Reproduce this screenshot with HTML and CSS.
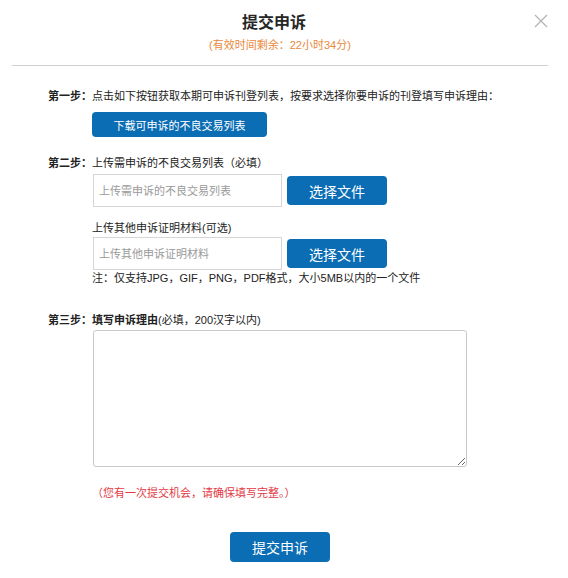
FILE: index.html
```html
<!DOCTYPE html>
<html lang="zh-CN">
<head>
<meta charset="utf-8">
<title>提交申诉</title>
<link rel="stylesheet" href="styles.css">
</head>
<body>
<div class="dialog">
  <div class="header">
    <h1 class="title">提交申诉</h1>
    <p class="subtitle">(有效时间剩余：22小时34分)</p>
    <button class="close" aria-label="关闭">
      <svg width="14" height="14" viewBox="0 0 14 14"><path d="M1 1 L13 13 M13 1 L1 13" stroke="#b4b4b4" stroke-width="1.3" fill="none"/></svg>
    </button>
  </div>
  <div class="steps">
    <div class="step step-one">
      <div class="step-label">第一步：</div>
      <div class="step-body">
        <div class="line">点击如下按钮获取本期可申诉刊登列表，按要求选择你要申诉的刊登填写申诉理由：</div>
        <button class="btn btn-download">下载可申诉的不良交易列表</button>
      </div>
    </div>
    <div class="step step-two">
      <div class="step-label">第二步：</div>
      <div class="step-body">
        <div class="line">上传需申诉的不良交易列表（必填）</div>
        <div class="upload-row">
          <input class="file-input" type="text" placeholder="上传需申诉的不良交易列表">
          <button class="btn btn-file">选择文件</button>
        </div>
        <div class="line line-opt">上传其他申诉证明材料(可选)</div>
        <div class="upload-row upload-row-tight">
          <input class="file-input" type="text" placeholder="上传其他申诉证明材料">
          <button class="btn btn-file">选择文件</button>
        </div>
        <div class="line">注：仅支持JPG，GIF，PNG，PDF格式，大小5MB以内的一个文件</div>
      </div>
    </div>
    <div class="step step-three">
      <div class="step-label">第三步：</div>
      <div class="step-body">
        <div class="line"><b>填写申诉理由</b>(必填，200汉字以内)</div>
        <textarea class="reason"></textarea>
        <div class="line warn">（您有一次提交机会，请确保填写完整。）</div>
      </div>
    </div>
  </div>
  <div class="footer">
    <button class="btn btn-submit">提交申诉</button>
  </div>
</div>
</body>
</html>
```

FILE: styles.css
```css
* { box-sizing: border-box; }
html, body { margin: 0; padding: 0; background: #fff; }
body {
  font-family: "Liberation Sans", "Noto Sans CJK SC", sans-serif;
  font-size: 11px;
  color: #222;
}
.dialog { width: 568px; padding: 0 20px 0 12px; }
.header { position: relative; text-align: center; padding-top: 12px; border-bottom: 1px solid #cfcfcf; padding-bottom: 12px; }
.title { margin: 0; font-size: 16px; line-height: 22px; font-weight: bold; color: #262626; padding-right: 12px; }
.subtitle { margin: 3px 0 0; font-size: 11px; line-height: 16px; color: #e8893c; }
.close {
  position: absolute; right: 0; top: 14px;
  width: 14px; height: 14px; padding: 0; border: 0; background: none; cursor: pointer;
}
.close svg { display: block; }
.steps { padding: 22px 0 0 36px; }
.step { display: flex; }
.step-label { width: 44px; flex: none; font-weight: bold; line-height: 16px; white-space: nowrap; }
.step-body { display: flex; flex-direction: column; align-items: flex-start; }
.line { line-height: 16px; white-space: nowrap; }
.btn {
  font-family: "Liberation Sans", "Noto Sans CJK SC", sans-serif;
  background: #0b6db3; color: #fff; border: 0; border-radius: 4px; cursor: pointer; padding: 0;
}
.btn-download { margin-top: 8px; width: 175px; height: 25px; font-size: 11px; }
.step-two { margin-top: 18px; }
.upload-row { display: flex; align-items: center; margin-top: 3px; margin-left: 1px; }
.upload-row-tight { margin-top: 1px; }
.file-input {
  width: 189px; height: 33px; border: 1px solid #d6d6d6; border-radius: 0;
  padding: 0 5px; font-family: inherit; font-size: 11px; color: #333; outline: none;
}
.file-input::placeholder { color: #9a9a9a; }
.btn-file { width: 100px; height: 29px; margin-left: 5px; font-size: 14px; }
.line-opt { margin-top: 13px; }
.step-three { margin-top: 26px; }
.step-three b { font-weight: bold; }
.reason {
  display: block; margin-top: 2px; margin-left: 1px; width: 374px; height: 137px;
  border: 1px solid #c9c9c9; border-radius: 3px; resize: both; font-family: inherit;
}
.warn { margin-top: 18px; color: #e23a44; }
.footer { display: flex; justify-content: center; padding-top: 31px; }
.btn-submit { width: 100px; height: 30px; font-size: 14px; }
```
